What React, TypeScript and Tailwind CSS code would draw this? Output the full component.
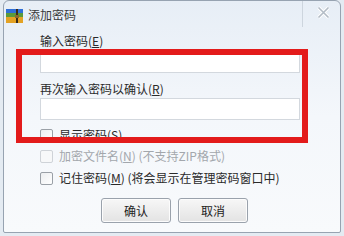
import type { ReactNode } from 'react';

const font = { fontFamily: '"Noto Sans CJK SC", "Microsoft YaHei", sans-serif' };

function RarIcon() {
  return (
    <svg width="17" height="14" viewBox="0 0 17 14">
      <rect x="0" y="0" width="17" height="4" fill="#2f6fd6" />
      <rect x="0" y="4" width="17" height="4" fill="#5a9a3a" />
      <rect x="0" y="8" width="17" height="6" fill="#e3a224" />
      <rect x="10" y="0" width="2" height="14" fill="#3b2a18" />
      <rect x="9" y="6" width="4" height="3" fill="#8a6a2a" />
    </svg>
  );
}

function Checkbox({ disabled, children }: { disabled?: boolean; children: ReactNode }) {
  return (
    <div className="flex items-center h-[14px]">
      <span
        className={
          disabled
            ? 'w-[13px] h-[13px] rounded-[2px] border border-[#cfd3d8] bg-[#f7f8f9]'
            : 'w-[13px] h-[13px] rounded-[2px] border border-[#9aa0a7] bg-gradient-to-br from-[#eceef0] to-white'
        }
      />
      <span
        className={
          disabled
            ? 'ml-[6px] text-[12px] leading-[14px] text-[#a3a7ac]'
            : 'ml-[6px] text-[12px] leading-[14px] text-[#2a2a2a]'
        }
      >
        {children}
      </span>
    </div>
  );
}

function Button({ children }: { children: ReactNode }) {
  return (
    <button className="w-[70px] h-[25px] rounded-[3px] border border-[#9aa2ac] bg-gradient-to-b from-[#f7f7f7] to-[#e3e3e3] text-[12px] text-[#222] shadow-[inset_0_0_0_1px_#fcfcfc]">
      {children}
    </button>
  );
}

export default function App() {
  return (
    <div className="w-[344px] h-[236px] bg-[#e4ebf2] overflow-hidden" style={font}>
      <div className="relative ml-[3px] w-[338px] h-[233px] border border-[#97a3b1] rounded-t-[6px] rounded-b-[2px] bg-gradient-to-b from-[#e7eef6] via-[#f4f7fb] to-[#f8fafc]">
        {/* Title bar */}
        <div className="relative flex items-center h-[28px] pl-[2px]">
          <div className="mt-[1px]">
            <RarIcon />
          </div>
          <span className="ml-[5px] text-[12px] text-[#3a3a3a]">添加密码</span>
          <div className="absolute left-[298px] top-0 w-px h-[26px] bg-[#cdd5de]" />
          <svg className="absolute left-[313px] top-[5px]" width="13" height="13" viewBox="0 0 13 13">
            <path d="M1.5 1.5 L11.5 11.5 M11.5 1.5 L1.5 11.5" stroke="#ffffff" strokeWidth="3.4" />
            <path d="M1.5 1.5 L11.5 11.5 M11.5 1.5 L1.5 11.5" stroke="#b3bcc6" strokeWidth="1.6" />
          </svg>
        </div>

        {/* Form */}
        <div className="flex flex-col pl-[36px]">
          <div className="mt-[5px] h-[14px] text-[12px] leading-[14px] text-[#2a2a2a]">
            输入密码(<u>E</u>)
          </div>
          <div className="mt-[3px] w-[260px] h-[22px] border border-[#d3d8de] bg-white" />
          <div className="mt-[9px] h-[14px] text-[12px] leading-[14px] text-[#2a2a2a]">
            再次输入密码以确认(<u>R</u>)
          </div>
          <div className="mt-[2px] w-[260px] h-[22px] border border-[#d3d8de] bg-white" />

          <div className="mt-[8px] flex flex-col gap-[7px]">
            <Checkbox>
              显示密码(<u>S</u>)
            </Checkbox>
            <Checkbox disabled>
              加密文件名(<u>N</u>) (不支持ZIP格式)
            </Checkbox>
            <div className="mt-px">
              <Checkbox>
                记住密码(<u>M</u>) (将会显示在管理密码窗口中)
              </Checkbox>
            </div>
          </div>

          <div className="mt-[13px] ml-[61px] flex gap-[7px]">
            <Button>确认</Button>
            <Button>取消</Button>
          </div>
        </div>

        {/* Red highlight */}
        <div className="absolute left-[12px] top-[48px] w-[292px] h-[94px] border-[6px] border-[#e31b1b]" />
      </div>
    </div>
  );
}
